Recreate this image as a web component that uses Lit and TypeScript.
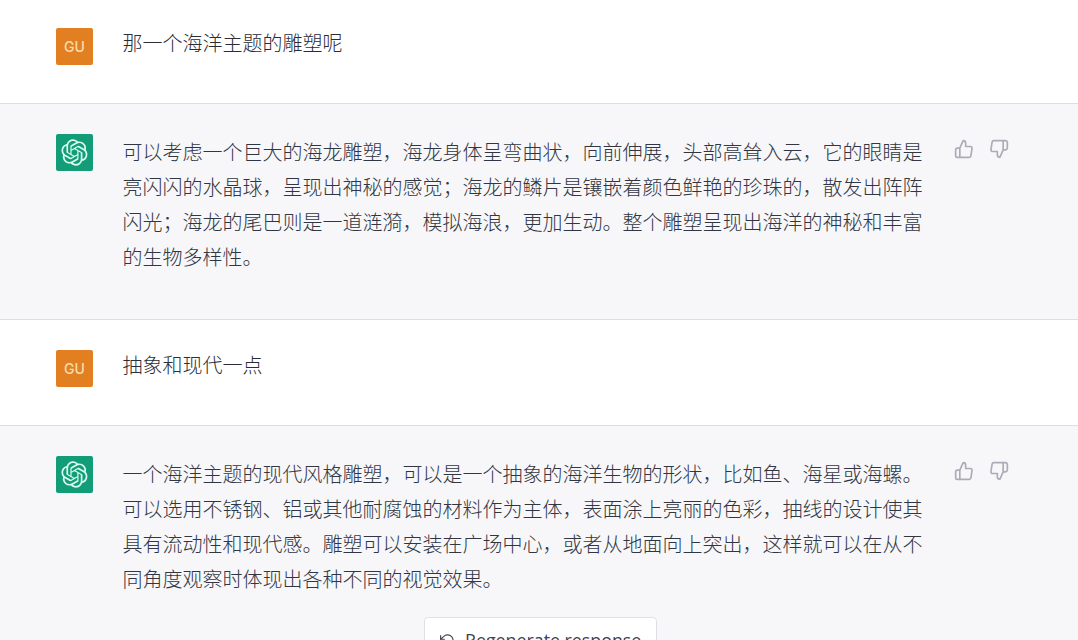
import { LitElement, html, css, svg, nothing } from 'lit';
import { customElement, property } from 'lit/decorators.js';

interface Message {
    role: 'user' | 'assistant';
    text: string;
}

const MESSAGES: Message[] = [
    { role: 'user', text: '那一个海洋主题的雕塑呢' },
    {
        role: 'assistant',
        text: '可以考虑一个巨大的海龙雕塑，海龙身体呈弯曲状，向前伸展，头部高耸入云，它的眼睛是亮闪闪的水晶球，呈现出神秘的感觉；海龙的鳞片是镶嵌着颜色鲜艳的珍珠的，散发出阵阵闪光；海龙的尾巴则是一道涟漪，模拟海浪，更加生动。整个雕塑呈现出海洋的神秘和丰富的生物多样性。',
    },
    { role: 'user', text: '抽象和现代一点' },
    {
        role: 'assistant',
        text: '一个海洋主题的现代风格雕塑，可以是一个抽象的海洋生物的形状，比如鱼、海星或海螺。可以选用不锈钢、铝或其他耐腐蚀的材料作为主体，表面涂上亮丽的色彩，抽线的设计使其具有流动性和现代感。雕塑可以安装在广场中心，或者从地面向上突出，这样就可以在从不同角度观察时体现出各种不同的视觉效果。',
    },
];

const logoIcon = html`<svg class="logo" viewBox="0 0 41 41" fill="currentColor">
    <path d="M37.5324 16.8707C37.9808 15.5241 38.1363 14.0974 37.9886 12.6859C37.8409 11.2744 37.3934 9.91076 36.676 8.68622C35.6126 6.83404 33.9882 5.3676 32.0373 4.4985C30.0864 3.62941 27.9098 3.40259 25.8215 3.85078C24.8796 2.7893 23.7219 1.94125 22.4257 1.36341C21.1295 0.785575 19.7249 0.491269 18.3058 0.500197C16.1708 0.495044 14.0893 1.16803 12.3614 2.42214C10.6335 3.67624 9.34853 5.44666 8.6917 7.47815C7.30085 7.76286 5.98686 8.3414 4.8377 9.17505C3.68854 10.0087 2.73073 11.0782 2.02839 12.312C0.956464 14.1591 0.498905 16.2988 0.721698 18.4228C0.944492 20.5467 1.83612 22.5449 3.268 24.1293C2.81966 25.4759 2.66413 26.9026 2.81182 28.3141C2.95951 29.7256 3.40701 31.0892 4.12437 32.3138C5.18791 34.1659 6.8123 35.6322 8.76321 36.5013C10.7141 37.3704 12.8907 37.5973 14.9789 37.1492C15.9208 38.2107 17.0786 39.0587 18.3747 39.6366C19.6709 40.2144 21.0755 40.5087 22.4946 40.4998C24.6307 40.5054 26.7133 39.8321 28.4418 38.5772C30.1704 37.3223 31.4556 35.5506 32.1119 33.5179C33.5027 33.2332 34.8167 32.6547 35.9659 31.821C37.115 30.9874 38.0728 29.9178 38.7752 28.684C39.8458 26.8371 40.3023 24.6979 40.0789 22.5748C39.8556 20.4517 38.9639 18.4544 37.5324 16.8707ZM22.4978 37.8849C20.7443 37.8874 19.0459 37.2733 17.6994 36.1501C17.7601 36.117 17.8666 36.0586 17.936 36.0161L25.9004 31.4156C26.1003 31.3019 26.2663 31.137 26.3813 30.9378C26.4964 30.7386 26.5563 30.5124 26.5549 30.2825V19.0542L29.9213 20.998C29.9389 21.0068 29.9541 21.0198 29.9656 21.0359C29.977 21.052 29.9842 21.0707 29.9867 21.0902V30.3889C29.9842 32.375 29.1946 34.2791 27.7909 35.6841C26.3872 37.0892 24.4838 37.8806 22.4978 37.8849ZM6.39227 31.0064C5.51397 29.4888 5.19742 27.7107 5.49804 25.9832C5.55718 26.0187 5.66048 26.0818 5.73461 26.1244L13.699 30.7248C13.8975 30.8408 14.1233 30.902 14.3532 30.902C14.583 30.902 14.8088 30.8408 15.0073 30.7248L24.731 25.1103V28.9979C24.7321 29.0177 24.7283 29.0376 24.7199 29.0556C24.7115 29.0736 24.6988 29.0893 24.6829 29.1012L16.6317 33.7497C14.9096 34.7416 12.8643 35.0097 10.9447 34.4954C9.02506 33.9811 7.38785 32.7263 6.39227 31.0064ZM4.29707 13.6194C5.17156 12.0998 6.55279 10.9364 8.19885 10.3327C8.19885 10.4013 8.19491 10.5228 8.19491 10.6071V19.808C8.19351 20.0378 8.25334 20.2638 8.36823 20.4629C8.48312 20.6619 8.64893 20.8267 8.84863 20.9404L18.5723 26.5542L15.206 28.4979C15.1894 28.5089 15.1703 28.5155 15.1505 28.5173C15.1307 28.5191 15.1107 28.516 15.0924 28.5082L7.04046 23.8557C5.32135 22.8601 4.06716 21.2235 3.55289 19.3046C3.03862 17.3858 3.30624 15.3413 4.29707 13.6194ZM31.955 20.0556L22.2312 14.4411L25.5976 12.4981C25.6142 12.4872 25.6333 12.4805 25.6531 12.4787C25.6729 12.4769 25.6928 12.4801 25.7111 12.4879L33.7631 17.1364C34.9967 17.849 36.0017 18.8982 36.6606 20.1613C37.3194 21.4244 37.6047 22.849 37.4832 24.2684C37.3617 25.6878 36.8382 27.0432 35.9743 28.1759C35.1103 29.3086 33.9415 30.1717 32.6047 30.6641C32.6047 30.5947 32.6047 30.4733 32.6047 30.3889V21.188C32.6066 20.9586 32.5474 20.7328 32.4332 20.5338C32.319 20.3348 32.154 20.1698 31.955 20.0556ZM35.3055 15.0128C35.2464 14.9765 35.1431 14.9142 35.069 14.8717L27.1045 10.2712C26.906 10.1554 26.6803 10.0943 26.4504 10.0943C26.2206 10.0943 25.9948 10.1554 25.7963 10.2712L16.0726 15.8858V11.9982C16.0715 11.9783 16.0753 11.9585 16.0837 11.9405C16.0921 11.9225 16.1048 11.9068 16.1207 11.8949L24.1719 7.25025C25.4053 6.53903 26.8158 6.19376 28.2383 6.25482C29.6608 6.31589 31.0364 6.78077 32.2044 7.59508C33.3723 8.40939 34.2842 9.53945 34.8334 10.8531C35.3826 12.1667 35.5464 13.6095 35.3055 15.0128ZM14.2424 21.9419L10.8752 19.9981C10.8576 19.9893 10.8423 19.9763 10.8309 19.9602C10.8195 19.9441 10.8122 19.9254 10.8098 19.9058V10.6071C10.8107 9.18295 11.2173 7.78848 11.9819 6.58696C12.7466 5.38544 13.8377 4.42659 15.1275 3.82264C16.4173 3.21869 17.8524 2.99464 19.2649 3.1767C20.6775 3.35876 22.0089 3.93941 23.1034 4.85067C23.0427 4.88379 22.937 4.94215 22.8668 4.98473L14.9024 9.58517C14.7025 9.69878 14.5366 9.86356 14.4215 10.0626C14.3065 10.2616 14.2466 10.4877 14.2479 10.7175L14.2424 21.9419ZM16.071 17.9991L20.4018 15.4978L24.7325 17.9975V22.9985L20.4018 25.4983L16.071 22.9985V17.9991Z" />
</svg>`;

const thumbsUp = svg`<path d="M14 9V5a3 3 0 0 0-3-3l-4 9v11h11.28a2 2 0 0 0 2-1.7l1.38-9a2 2 0 0 0-2-2.3zM7 22H4a2 2 0 0 1-2-2v-7a2 2 0 0 1 2-2h3" />`;
const thumbsDown = svg`<path d="M10 15v4a3 3 0 0 0 3 3l4-9V2H5.72a2 2 0 0 0-2 1.7l-1.38 9a2 2 0 0 0 2 2.3zm7-13h2.67A2.31 2.31 0 0 1 22 4v7a2.31 2.31 0 0 1-2.33 2H17" />`;

@customElement('chat-message')
export class ChatMessage extends LitElement {
    @property({ type: String, reflect: true }) role: 'user' | 'assistant' = 'user';
    @property({ type: String }) text = '';

    static styles = css`
        :host {
            display: flex;
            align-items: flex-start;
            box-sizing: border-box;
            flex: none;
            height: 106px;
            padding: 30px 0 0 56px;
            border-bottom: 1px solid #dedee2;
            background: #fff;
            color: #2b2c35;
        }

        :host([role='assistant']) {
            height: 216px;
            background: #f7f7f9;
            color: #303643;
        }

        .avatar {
            display: flex;
            align-items: center;
            justify-content: center;
            flex: none;
            width: 37px;
            height: 37px;
            border-radius: 2px;
            background: #e27f20;
            color: #f9dcae;
            font: 500 14px/1 Inter, sans-serif;
        }

        :host([role='assistant']) .avatar {
            background: #129c78;
            color: #d8fbee;
        }

        .logo {
            width: 27px;
            height: 27px;
        }

        .text {
            flex: none;
            width: 801px;
            margin: -3px 0 0 29.5px;
            font-size: 20px;
            font-weight: 300;
            line-height: 35px;
        }

        :host([role='assistant']) .text {
            margin-top: 0;
        }

        .actions {
            display: flex;
            gap: 15px;
            margin: 5px 0 0 30px;
            color: #acacb8;
        }

        .icon {
            width: 20px;
            height: 20px;
            fill: none;
            stroke: currentColor;
            stroke-width: 2;
            stroke-linecap: round;
            stroke-linejoin: round;
        }
    `;

    render() {
        const isAssistant = this.role === 'assistant';
        return html`
            <div class="avatar">${isAssistant ? logoIcon : 'GU'}</div>
            <div class="text">${this.text}</div>
            ${isAssistant
                ? html`<div class="actions">
                      <svg class="icon" viewBox="0 0 24 24">${thumbsUp}</svg>
                      <svg class="icon" viewBox="0 0 24 24">${thumbsDown}</svg>
                  </div>`
                : nothing}
        `;
    }
}

@customElement('app-root')
export class AppRoot extends LitElement {
    static styles = css`
        :host {
            display: block;
            position: relative;
            height: 640px;
            overflow: hidden;
            background: #f7f7f9;
            font-family: 'Noto Sans CJK SC', sans-serif;
        }

        .thread {
            display: flex;
            flex-direction: column;
            /* The thread is scrolled slightly past the top of the first message */
            margin-top: -2px;
        }

        .thread chat-message:last-child {
            border-bottom-color: transparent;
        }

        /* Floats over the end of the thread */
        .regenerate {
            position: absolute;
            top: 617px;
            left: 424px;
            display: flex;
            align-items: center;
            box-sizing: border-box;
            width: 233px;
            height: 46px;
            padding: 0 15px;
            gap: 10px;
            border: 1px solid #e0e0e4;
            border-radius: 4px;
            background: #fff;
            color: #40414f;
            font: 400 17.8px/26px 'Open Sans', sans-serif;
            white-space: nowrap;
        }

        .refresh {
            flex: none;
            width: 15px;
            height: 15px;
            fill: none;
            stroke: currentColor;
            stroke-width: 1.7;
            stroke-linecap: round;
            stroke-linejoin: round;
        }
    `;

    render() {
        return html`
            <div class="thread">
                ${MESSAGES.map((m) => html`<chat-message role=${m.role} .text=${m.text}></chat-message>`)}
            </div>
            <button class="regenerate">
                <svg class="refresh" viewBox="0 0 24 24">
                    <polyline points="1 4 1 10 7 10" />
                    <path d="M3.51 15a9 9 0 1 0 2.13-9.36L1 10" />
                </svg>
                Regenerate response
            </button>
        `;
    }
}
